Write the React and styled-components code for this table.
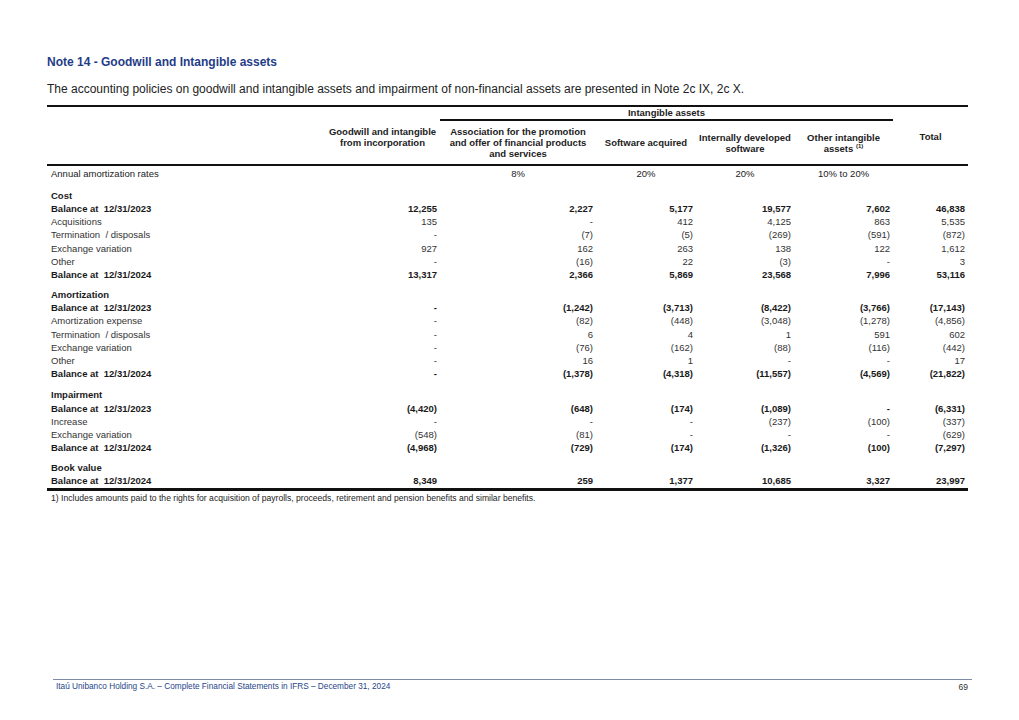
import React from 'react'
import styled, { createGlobalStyle } from 'styled-components'

const cost = [
  { kind: 'head', label: 'Cost', pad: 7.5 },
  { kind: 'total', label: 'Balance at  12/31/2023', values: ['12,255', '2,227', '5,177', '19,577', '7,602', '46,838'] },
  { kind: 'item', label: 'Acquisitions', values: ['135', '-', '412', '4,125', '863', '5,535'] },
  { kind: 'item', label: 'Termination  / disposals', values: ['-', '(7)', '(5)', '(269)', '(591)', '(872)'] },
  { kind: 'item', label: 'Exchange variation', values: ['927', '162', '263', '138', '122', '1,612'] },
  { kind: 'item', label: 'Other', values: ['-', '(16)', '22', '(3)', '-', '3'] },
  { kind: 'total', label: 'Balance at  12/31/2024', values: ['13,317', '2,366', '5,869', '23,568', '7,996', '53,116'] },
]

const amortization = [
  { kind: 'head', label: 'Amortization', pad: 6.6 },
  { kind: 'total', label: 'Balance at  12/31/2023', values: ['-', '(1,242)', '(3,713)', '(8,422)', '(3,766)', '(17,143)'] },
  { kind: 'item', label: 'Amortization expense', values: ['-', '(82)', '(448)', '(3,048)', '(1,278)', '(4,856)'] },
  { kind: 'item', label: 'Termination  / disposals', values: ['-', '6', '4', '1', '591', '602'] },
  { kind: 'item', label: 'Exchange variation', values: ['-', '(76)', '(162)', '(88)', '(116)', '(442)'] },
  { kind: 'item', label: 'Other', values: ['-', '16', '1', '-', '-', '17'] },
  { kind: 'total', label: 'Balance at  12/31/2024', values: ['-', '(1,378)', '(4,318)', '(11,557)', '(4,569)', '(21,822)'] },
]

const impairment = [
  { kind: 'head', label: 'Impairment', pad: 7.8 },
  { kind: 'total', label: 'Balance at  12/31/2023', values: ['(4,420)', '(648)', '(174)', '(1,089)', '-', '(6,331)'] },
  { kind: 'item', label: 'Increase', values: ['-', '-', '-', '(237)', '(100)', '(337)'] },
  { kind: 'item', label: 'Exchange variation', values: ['(548)', '(81)', '-', '-', '-', '(629)'] },
  { kind: 'total', label: 'Balance at  12/31/2024', values: ['(4,968)', '(729)', '(174)', '(1,326)', '(100)', '(7,297)'] },
]

const bookValue = [
  { kind: 'head', label: 'Book value', pad: 6.6 },
  { kind: 'total', label: 'Balance at  12/31/2024', values: ['8,349', '259', '1,377', '10,685', '3,327', '23,997'], last: true },
]

const rows = [...cost, ...amortization, ...impairment, ...bookValue]

const GlobalStyle = createGlobalStyle`
  html, body {
    margin: 0;
    padding: 0;
    background: #ffffff;
  }
  body {
    font-family: "Liberation Sans", Arial, sans-serif;
    color: #222;
  }
`

const Page = styled.div`
  width: 1019px;
  height: 720px;
  box-sizing: border-box;
  padding: 55px 0 28px 47px;
  display: flex;
  flex-direction: column;
`

const Title = styled.h1`
  margin: 0;
  font-size: 12px;
  line-height: 14px;
  font-weight: bold;
  color: #1f3d87;
`

const Intro = styled.p`
  margin: 13px 0 9px;
  font-size: 12px;
  line-height: 14px;
  color: #222;
`

const Table = styled.table`
  width: 921px;
  table-layout: fixed;
  border-collapse: collapse;
  border-top: 2px solid #111;
  font-size: 9.5px;
`

const GroupCell = styled.th`
  height: 12px;
  padding: 0;
  font-weight: bold;
  line-height: 12px;
  text-align: center;
  border-bottom: ${(p) => (p.$line ? '2px solid #111' : 'none')};
`

const HeadCell = styled.th`
  height: ${(p) => 43 - (p.$lift || 0)}px;
  padding: 0 1px ${(p) => p.$lift || 0}px;
  font-weight: bold;
  line-height: 11px;
  text-align: center;
  vertical-align: middle;
  white-space: nowrap;
  border-bottom: 2px solid #111;
`

const Sup = styled.sup`
  font-size: 6px;
  line-height: 0;
  vertical-align: 4px;
`

const RateCell = styled.td`
  height: 15px;
  padding: 0;
  text-align: ${(p) => (p.$left ? 'left' : 'center')};
  padding-left: ${(p) => (p.$left ? '4px' : '0')};
  line-height: 15px;
`

const Row = styled.tr`
  font-weight: ${(p) => (p.$kind === 'item' ? 'normal' : 'bold')};
  color: ${(p) => (p.$kind === 'item' ? '#333' : '#1a1a1a')};
  border-bottom: ${(p) => (p.$last ? '3px solid #111' : 'none')};

  td {
    height: 13.25px;
    line-height: 13.25px;
    padding: 0;
    vertical-align: bottom;
    white-space: pre;
  }
`

const Label = styled.td`
  && {
    padding-left: 4px;
    padding-top: ${(p) => p.$pad || 0}px;
  }
`

const Num = styled.td`
  text-align: right;
  && {
    padding-right: 3px;
  }
`

const Footnote = styled.p`
  margin: 2px 0 0 4px;
  font-size: 8.6px;
  line-height: 10px;
  color: #222;
`

const Footer = styled.footer`
  margin: auto 47px 0 6px;
  border-top: 1.5px solid #7d8ba6;
  padding: 2px 4px 0 3px;
  display: flex;
  justify-content: space-between;
  font-size: 8.25px;
  line-height: 10px;
  color: #27458a;
`

const PageNum = styled.span`
  color: #333;
  font-size: 8.5px;
`

function App() {
  return (
    <Page>
      <GlobalStyle />
      <Title>Note 14 - Goodwill and Intangible assets</Title>
      <Intro>
        The accounting policies on goodwill and intangible assets and impairment of non-financial assets are
        presented in Note 2c IX, 2c X.
      </Intro>
      <Table>
        <colgroup>
          <col style={{ width: 278 }} />
          <col style={{ width: 115 }} />
          <col style={{ width: 156 }} />
          <col style={{ width: 100 }} />
          <col style={{ width: 98 }} />
          <col style={{ width: 99 }} />
          <col style={{ width: 75 }} />
        </colgroup>
        <thead>
          <tr>
            <GroupCell />
            <GroupCell />
            <GroupCell colSpan={4} $line>
              Intangible assets
            </GroupCell>
            <GroupCell />
          </tr>
          <tr>
            <HeadCell />
            <HeadCell $lift={11}>
              Goodwill and intangible
              <br />
              from incorporation
            </HeadCell>
            <HeadCell>
              Association for the promotion
              <br />
              and offer of financial products
              <br />
              and services
            </HeadCell>
            <HeadCell>Software acquired</HeadCell>
            <HeadCell>
              Internally developed
              <br />
              software
            </HeadCell>
            <HeadCell>
              Other intangible
              <br />
              assets <Sup>(1)</Sup>
            </HeadCell>
            <HeadCell $lift={12}>Total</HeadCell>
          </tr>
        </thead>
        <tbody>
          <tr>
            <RateCell $left>Annual amortization rates</RateCell>
            <RateCell />
            <RateCell>8%</RateCell>
            <RateCell>20%</RateCell>
            <RateCell>20%</RateCell>
            <RateCell>10% to 20%</RateCell>
            <RateCell />
          </tr>
          {rows.map((row, i) => (
            <Row key={i} $kind={row.kind} $last={row.last}>
              <Label $pad={row.pad}>{row.label}</Label>
              {row.kind === 'head'
                ? Array.from({ length: 6 }).map((_, j) => <td key={j} />)
                : row.values.map((v, j) => <Num key={j}>{v}</Num>)}
            </Row>
          ))}
        </tbody>
      </Table>
      <Footnote>
        1) Includes amounts paid to the rights for acquisition of payrolls, proceeds, retirement and pension benefits
        and similar benefits.
      </Footnote>
      <Footer>
        <span>Itaú Unibanco Holding S.A. – Complete Financial Statements in IFRS – December 31, 2024</span>
        <PageNum>69</PageNum>
      </Footer>
    </Page>
  )
}

export default App
